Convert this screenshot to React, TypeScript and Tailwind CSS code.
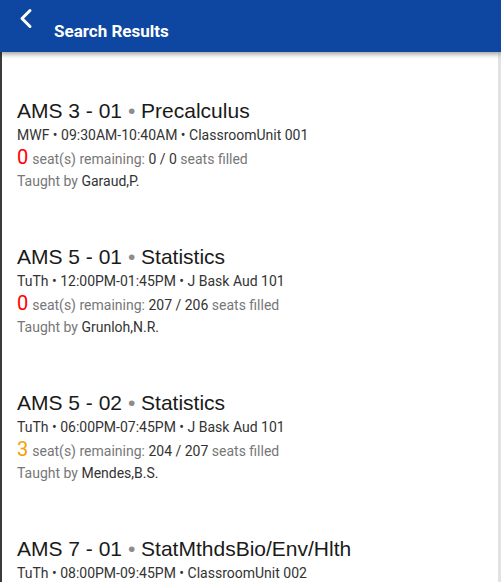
import React from "react";

interface Course {
  code: string;
  name: string;
  days: string;
  time: string;
  room: string;
  open: number;
  filled: string;
  teacher?: string;
}

const courses: Course[] = [
  { code: "AMS 3 - 01", name: "Precalculus", days: "MWF", time: "09:30AM-10:40AM", room: "ClassroomUnit 001", open: 0, filled: "0 / 0", teacher: "Garaud,P." },
  { code: "AMS 5 - 01", name: "Statistics", days: "TuTh", time: "12:00PM-01:45PM", room: "J Bask Aud 101", open: 0, filled: "207 / 206", teacher: "Grunloh,N.R." },
  { code: "AMS 5 - 02", name: "Statistics", days: "TuTh", time: "06:00PM-07:45PM", room: "J Bask Aud 101", open: 3, filled: "204 / 207", teacher: "Mendes,B.S." },
  { code: "AMS 7 - 01", name: "StatMthdsBio/Env/Hlth", days: "TuTh", time: "08:00PM-09:45PM", room: "ClassroomUnit 002", open: 0, filled: "0 / 0", teacher: "Staff" },
];

function CourseItem({ course }: { course: Course }) {
  return (
    <div className="h-[146px] pt-[47px] pl-[15px]">
      <div className="font-['Liberation_Sans',Arial,sans-serif] text-[21px] leading-[24px] text-[#1a1a1a]">
        {course.code} <span className="text-[#8c8c8c]">•</span> {course.name}
      </div>
      <div className="mt-[2px] text-[14px] leading-[20px] text-[#333]">
        {course.days} • {course.time} • {course.room}
      </div>
      <div className="mt-[2px] text-[14px] leading-[20px] text-[#777]">
        <span className={course.open > 0 ? "text-[20px] leading-[20px] text-[#f5a000]" : "text-[20px] leading-[20px] text-[#ff0000]"}>
          {course.open}
        </span>
        <span className="ml-[4px]">
          seat(s) remaining: <span className="text-[#333]">{course.filled}</span> seats filled
        </span>
      </div>
      <div className="mt-[2px] text-[14px] leading-[20px] text-[#777]">
        Taught by <span className="text-[#333]">{course.teacher}</span>
      </div>
    </div>
  );
}

export default function App() {
  return (
    <div
      className="relative w-[501px] h-[582px] overflow-hidden bg-white"
      style={{ fontFamily: "Roboto, 'Noto Sans', sans-serif" }}
    >
      <header className="relative z-10 h-[52px] bg-[#0d47a1] shadow-[0_2px_5px_rgba(0,0,0,0.4)]">
        <svg className="absolute left-[18px] top-[8px]" width="16" height="21" viewBox="0 0 16 21" fill="none">
          <polyline points="12,2.5 4,10.5 12,18.5" stroke="white" strokeWidth="3" strokeLinecap="round" strokeLinejoin="round" />
        </svg>
        <h1 className="absolute left-[54px] top-[21px] text-[17px] leading-[20px] font-bold text-white">
          Search Results
        </h1>
      </header>
      <main className="h-[530px] border-l-2 border-[#3b3b3b] border-r-[3px] border-r-[#e2e2e2]">
        {courses.map((c) => (
          <CourseItem key={c.code} course={c} />
        ))}
      </main>
    </div>
  );
}
